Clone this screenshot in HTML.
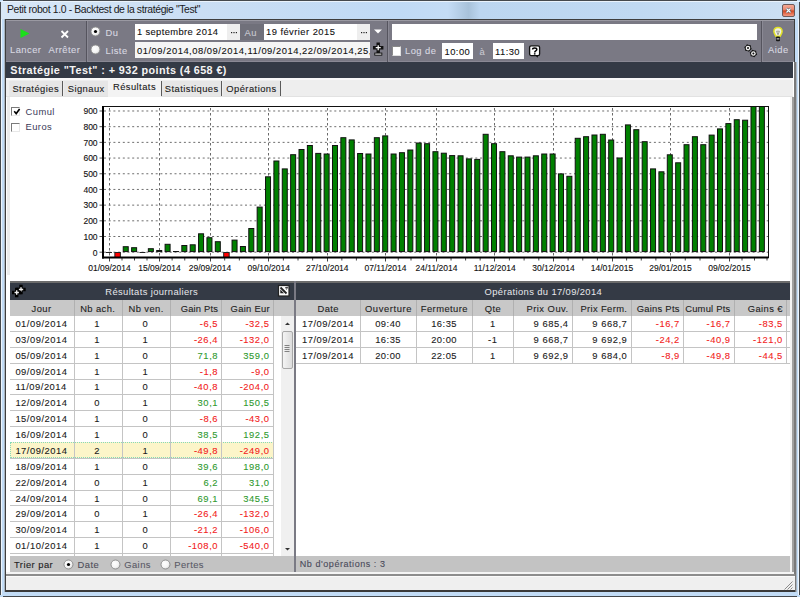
<!DOCTYPE html>
<html><head><meta charset="utf-8"><style>
html,body{margin:0;padding:0;width:800px;height:597px;overflow:hidden;background:#c4daf1;}
body{position:relative;font-family:"Liberation Sans", sans-serif;}
div{position:absolute;}
.tx{-webkit-text-stroke:0.1px currentColor;}
</style></head><body>
<div style="left:0px;top:0px;width:800px;height:597px;background:#c2dcf6;"></div>
<div style="left:3px;top:0px;width:794px;height:1px;background:#45494d;"></div>
<div style="left:0px;top:2px;width:1px;height:593px;background:#45494d;"></div>
<div style="left:1px;top:2px;width:1px;height:593px;background:#eef5fc;"></div>
<div style="left:4px;top:19px;width:1px;height:573px;background:#a8b4c0;"></div>
<div style="left:799px;top:2px;width:1px;height:593px;background:#45494d;"></div>
<div style="left:798px;top:2px;width:1px;height:593px;background:#eef5fc;"></div>
<div style="left:3px;top:595.5px;width:794px;height:1.5px;background:#45494d;"></div>
<div style="left:1px;top:1px;width:798px;height:18px;background:linear-gradient(90deg,#d8e7f6 0%,#cadef4 25%,#c0daf5 50%,#c4dcf5 56%,#a8c2da 58.6%,#bcd6f0 60%,#c0d9f2 80%,#cde0f3 100%);"></div>
<div style="left:1px;top:1px;width:798px;height:1px;background:#eaf3fc;"></div>
<div style="left:7px;top:4.70px;font-size:10.4px;line-height:10.4px;color:#1a1a22;font-weight:400;letter-spacing:-0.37px;white-space:pre;">Petit robot 1.0 - Backtest de la stratégie "Test"</div>
<div style="left:782.3px;top:4.3px;width:12.6px;height:12.5px;border:1px solid #6e5a5a;border-radius:2px;background:linear-gradient(#f2ab98 0%,#ec8a72 40%,#cf4a26 55%,#e67456 80%,#f09a84 100%);box-sizing:border-box"></div>
<svg style="position:absolute;left:784.8px;top:6.9px" width="7" height="7" viewBox="0 0 7 7"><path d="M1.5 1.5 L5.5 5.5 M5.5 1.5 L1.5 5.5" stroke="#3a4a5a" stroke-width="2.4"/><path d="M1.5 1.5 L5.5 5.5 M5.5 1.5 L1.5 5.5" stroke="#fff" stroke-width="1.3"/></svg>
<div style="left:5px;top:19px;width:790px;height:573px;background:#3e3e3e;"></div>
<div style="left:6px;top:20px;width:788px;height:571px;background:#ffffff;"></div>
<div style="left:6px;top:20px;width:788px;height:42px;background:#7a7984;"></div>
<div style="left:6px;top:20px;width:788px;height:1px;background:#9a99a2;"></div>
<div style="left:6px;top:61px;width:788px;height:1px;background:#8a8994;"></div>
<div style="left:86px;top:21px;width:1px;height:41px;background:#55545e;"></div>
<div style="left:87px;top:21px;width:1px;height:41px;background:#8a8994;"></div>
<div style="left:387px;top:21px;width:1px;height:41px;background:#55545e;"></div>
<div style="left:388px;top:21px;width:1px;height:41px;background:#8a8994;"></div>
<div style="left:761px;top:21px;width:1px;height:41px;background:#55545e;"></div>
<div style="left:762px;top:21px;width:1px;height:41px;background:#8a8994;"></div>
<svg style="position:absolute;left:19px;top:28px" width="12" height="12" viewBox="0 0 12 12"><path d="M1.5 1 L10.5 5.5 L1.5 10 Z" fill="#1be01b"/></svg>
<svg style="position:absolute;left:60px;top:30px" width="10" height="9" viewBox="0 0 10 9"><path d="M1.5 1 L8 7.5 M8 1 L1.5 7.5" stroke="#fff" stroke-width="1.8"/></svg>
<div class="tx" style="left:10px;top:45.04px;font-size:9.4px;line-height:9.4px;color:#d8d8e0;font-weight:400;letter-spacing:0.45px;white-space:pre;">Lancer</div>
<div class="tx" style="left:48.5px;top:45.04px;font-size:9.4px;line-height:9.4px;color:#d8d8e0;font-weight:400;letter-spacing:0.45px;white-space:pre;">Arrêter</div>
<svg style="position:absolute;left:90.4px;top:26.2px" width="11" height="11" viewBox="0 0 11 11"><defs><radialGradient id="rg9531" cx="0.4" cy="0.4" r="0.7"><stop offset="0" stop-color="#fff"/><stop offset="0.6" stop-color="#f4f4f4"/><stop offset="1" stop-color="#c8c8c8"/></radialGradient></defs><circle cx="5.5" cy="5.5" r="4.5" fill="url(#rg9531)" stroke="#8a8a8a" stroke-width="0.9"/><circle cx="5.5" cy="5.5" r="1.6" fill="#000"/></svg>
<svg style="position:absolute;left:90.4px;top:44.4px" width="11" height="11" viewBox="0 0 11 11"><defs><radialGradient id="rg9549" cx="0.4" cy="0.4" r="0.7"><stop offset="0" stop-color="#fff"/><stop offset="0.6" stop-color="#f4f4f4"/><stop offset="1" stop-color="#c8c8c8"/></radialGradient></defs><circle cx="5.5" cy="5.5" r="4.5" fill="url(#rg9549)" stroke="#8a8a8a" stroke-width="0.9"/></svg>
<div class="tx" style="left:105.5px;top:27.74px;font-size:9.4px;line-height:9.4px;color:#d8d8e0;font-weight:400;letter-spacing:0.45px;white-space:pre;">Du</div>
<div class="tx" style="left:105.5px;top:45.54px;font-size:9.4px;line-height:9.4px;color:#d8d8e0;font-weight:400;letter-spacing:0.45px;white-space:pre;">Liste</div>
<div style="left:135px;top:24px;width:92px;height:16px;background:#fff;"></div>
<div style="left:227px;top:24px;width:13px;height:16px;background:#eeeeee;"></div>
<svg style="position:absolute;left:230px;top:30.7px" width="8" height="4" viewBox="0 0 8 4"><rect x="1" y="1" width="1.2" height="1.2" fill="#222"/><rect x="3.4" y="1" width="1.2" height="1.2" fill="#222"/><rect x="5.8" y="1" width="1.2" height="1.2" fill="#222"/></svg>
<div class="tx" style="left:136.9px;top:27.24px;font-size:9.4px;line-height:9.4px;color:#111;font-weight:400;letter-spacing:0.37px;white-space:pre;">1 septembre 2014</div>
<div class="tx" style="left:244.5px;top:27.84px;font-size:9.4px;line-height:9.4px;color:#c8c8d0;font-weight:400;letter-spacing:0.45px;white-space:pre;">Au</div>
<div style="left:240px;top:24px;width:24px;height:16px;background:#70707a;"></div>
<div class="tx" style="left:244.5px;top:27.84px;font-size:9.4px;line-height:9.4px;color:#c8c8d0;font-weight:400;letter-spacing:0.45px;white-space:pre;">Au</div>
<div style="left:264px;top:24px;width:93px;height:16px;background:#fff;"></div>
<div style="left:357px;top:24px;width:13px;height:16px;background:#eeeeee;"></div>
<svg style="position:absolute;left:360px;top:30.7px" width="8" height="4" viewBox="0 0 8 4"><rect x="1" y="1" width="1.2" height="1.2" fill="#222"/><rect x="3.4" y="1" width="1.2" height="1.2" fill="#222"/><rect x="5.8" y="1" width="1.2" height="1.2" fill="#222"/></svg>
<div class="tx" style="left:266.0px;top:27.24px;font-size:9.4px;line-height:9.4px;color:#111;font-weight:400;letter-spacing:0.45px;white-space:pre;">19 février 2015</div>
<div style="left:135px;top:42px;width:235px;height:16px;background:#f5f5f5;overflow:hidden"><div class="tx" style="left:2px;top:3.64px;font-size:9.4px;line-height:10px;color:#111;white-space:pre;letter-spacing:0.52px">01/09/2014,08/09/2014,11/09/2014,22/09/2014,25,09</div></div>
<svg style="position:absolute;left:373px;top:28px" width="10" height="7" viewBox="0 0 10 7"><path d="M1 1.5 L9 1.5 L5 5.5 Z" fill="#fff"/></svg>
<svg style="position:absolute;left:372px;top:42px" width="12" height="16" viewBox="0 0 12 16"><path d="M6.2 2.2 V9.2 M2.7 5.7 H9.7" stroke="#111" stroke-width="3.4" stroke-linecap="square"/><path d="M6.2 3.2 V8.2 M3.7 5.7 H8.7" stroke="#fafafa" stroke-width="1.3"/><rect x="2.3" y="10.6" width="8" height="3" fill="#111"/><rect x="3.2" y="11.6" width="6.2" height="1" fill="#f4f4f4"/></svg>
<div style="left:391.5px;top:24px;width:365.7px;height:16px;background:#fff;"></div>
<div style="left:391.5px;top:46px;width:9.5px;height:10px;background:#fff;border-top:1px solid #8a8a8a;border-left:1px solid #8a8a8a;border-right:1px solid #e0e0e0;border-bottom:1px solid #e0e0e0;box-sizing:border-box;"></div>
<div class="tx" style="left:405px;top:45.54px;font-size:9.4px;line-height:9.4px;color:#d8d8e0;font-weight:400;letter-spacing:0.45px;white-space:pre;">Log de</div>
<div style="left:442px;top:43px;width:31px;height:16px;background:#fff;"></div>
<div class="tx" style="left:444.5px;top:46.54px;font-size:9.4px;line-height:9.4px;color:#111;font-weight:400;letter-spacing:0.45px;white-space:pre;">10:00</div>
<div class="tx" style="left:479.5px;top:46.54px;font-size:9.4px;line-height:9.4px;color:#c8c8d0;font-weight:400;letter-spacing:0.45px;white-space:pre;">à</div>
<div style="left:493px;top:43px;width:31px;height:16px;background:#fff;"></div>
<div class="tx" style="left:495px;top:46.54px;font-size:9.4px;line-height:9.4px;color:#111;font-weight:400;letter-spacing:0.45px;white-space:pre;">11:30</div>
<svg style="position:absolute;left:525px;top:42px" width="20" height="20" viewBox="0 0 20 20"><rect x="4.6" y="3.8" width="10" height="9.8" rx="1.6" fill="#fff" stroke="#111" stroke-width="1.3"/><path d="M10.2 13.3 L13.2 13.3 L12.6 15.8 Z" fill="#111"/><path d="M7.6 7.4 C7.6 5.4 11.8 5.4 11.8 7.4 C11.8 8.9 9.7 8.9 9.7 10.4" stroke="#000" stroke-width="1.5" fill="none"/><rect x="8.9" y="11.2" width="1.6" height="1.4" fill="#000"/></svg>
<svg style="position:absolute;left:740px;top:40px" width="20" height="20" viewBox="0 0 20 20"><polygon points="11.77,9.11 10.19,10.29 9.01,11.87 7.20,11.09 5.24,10.86 5.01,8.90 4.23,7.09 5.81,5.91 6.99,4.33 8.80,5.11 10.76,5.34 10.99,7.30" fill="#111"/><circle cx="8" cy="8.1" r="2.3" fill="#f4f4f4"/><circle cx="8" cy="8.1" r="1.0" fill="#111"/><polygon points="17.17,14.51 15.59,15.69 14.41,17.27 12.60,16.49 10.64,16.26 10.41,14.30 9.63,12.49 11.21,11.31 12.39,9.73 14.20,10.51 16.16,10.74 16.39,12.70" fill="#111"/><circle cx="13.4" cy="13.5" r="2.3" fill="#f4f4f4"/><circle cx="13.4" cy="13.5" r="1.0" fill="#111"/></svg>
<svg style="position:absolute;left:771px;top:26px" width="14" height="17" viewBox="0 0 14 17"><path d="M7 1.6 C4.3 1.6 2.9 3.6 2.9 5.6 C2.9 7.4 4.1 8.4 4.9 10.2 H9.1 C9.9 8.4 11.1 7.4 11.1 5.6 C11.1 3.6 9.7 1.6 7 1.6 Z" fill="#f0f0e4" stroke="#e2e226" stroke-width="1.5"/><path d="M5.6 5.2 H8.4 L7 8.8 Z" fill="none" stroke="#8a8a80" stroke-width="0.8"/><rect x="5" y="10.6" width="4" height="4.6" rx="1" fill="#151515"/><rect x="5.6" y="12" width="2.8" height="0.7" fill="#ccc"/><rect x="5.6" y="13.4" width="2.8" height="0.6" fill="#999"/></svg>
<div class="tx" style="left:768px;top:45.04px;font-size:9.4px;line-height:9.4px;color:#d8d8e0;font-weight:400;letter-spacing:0.45px;white-space:pre;">Aide</div>
<div style="left:6px;top:62px;width:787px;height:16px;background:#343a45;"></div>
<div style="left:10.3px;top:64.66px;font-size:10.8px;line-height:10.8px;color:#f4f4f4;font-weight:700;letter-spacing:0.42px;white-space:pre;">Stratégie "Test" : + 932 points (4 658 €)</div>
<div style="left:6px;top:78px;width:787px;height:19px;background:#eeeeee;"></div>
<div style="left:6px;top:78px;width:787px;height:2px;background:#f8f8f8;"></div>
<div style="left:6px;top:95.7px;width:787px;height:1px;background:#e2e2e2;"></div>
<div style="left:9px;top:81px;width:53px;height:15px;background:#e6e6e6;"></div>
<div class="tx" style="left:-164.28px;width:400px;text-align:center;top:83.94px;font-size:9.4px;line-height:9.4px;color:#1a1a1a;font-weight:400;letter-spacing:0.45px;white-space:pre;">Stratégies</div>
<div style="left:64px;top:81px;width:44px;height:15px;background:#e6e6e6;"></div>
<div class="tx" style="left:-113.78px;width:400px;text-align:center;top:83.94px;font-size:9.4px;line-height:9.4px;color:#1a1a1a;font-weight:400;letter-spacing:0.45px;white-space:pre;">Signaux</div>
<div style="left:108px;top:79px;width:52.5px;height:18px;background:#f3f3f3;"></div>
<div class="tx" style="left:-65.53px;width:400px;text-align:center;top:81.84px;font-size:9.4px;line-height:9.4px;color:#1a1a1a;font-weight:400;letter-spacing:0.45px;white-space:pre;">Résultats</div>
<div style="left:162px;top:81px;width:59px;height:15px;background:#e6e6e6;"></div>
<div class="tx" style="left:-8.28px;width:400px;text-align:center;top:83.94px;font-size:9.4px;line-height:9.4px;color:#1a1a1a;font-weight:400;letter-spacing:0.45px;white-space:pre;">Statistiques</div>
<div style="left:223px;top:81px;width:56.5px;height:15px;background:#e6e6e6;"></div>
<div class="tx" style="left:51.48px;width:400px;text-align:center;top:83.94px;font-size:9.4px;line-height:9.4px;color:#1a1a1a;font-weight:400;letter-spacing:0.45px;white-space:pre;">Opérations</div>
<div style="left:62px;top:80.5px;width:1px;height:15.5px;background:#5a5a5a;"></div>
<div style="left:160.5px;top:80.5px;width:1px;height:15.5px;background:#5a5a5a;"></div>
<div style="left:221px;top:80.5px;width:1px;height:15.5px;background:#5a5a5a;"></div>
<div style="left:279.5px;top:80.5px;width:1px;height:15.5px;background:#5a5a5a;"></div>
<div style="left:6px;top:97px;width:786px;height:184px;background:#ffffff;"></div>
<div style="left:7px;top:97px;width:3px;height:178px;background:#ececec;"></div>
<div style="left:11.3px;top:107px;width:9px;height:9px;background:#fff;border-top:1.5px solid #7a7a7a;border-left:1.5px solid #7a7a7a;border-right:1px solid #e8e8e8;border-bottom:1px solid #e8e8e8;box-sizing:border-box;"></div>
<svg style="position:absolute;left:11.5px;top:107px" width="9" height="9" viewBox="0 0 9 9"><path d="M2.2 4.3 L4.2 6.6 L7.6 2" stroke="#000" stroke-width="1.6" fill="none"/></svg>
<div style="left:25.5px;top:106.64px;font-size:9.4px;line-height:9.4px;color:#3a3a58;font-weight:400;letter-spacing:0.45px;white-space:pre;">Cumul</div>
<div style="left:11.3px;top:122.7px;width:9px;height:9px;background:#fff;border-top:1.5px solid #7a7a7a;border-left:1.5px solid #7a7a7a;border-right:1px solid #e8e8e8;border-bottom:1px solid #e8e8e8;box-sizing:border-box;"></div>
<div style="left:25.5px;top:122.44px;font-size:9.4px;line-height:9.4px;color:#3a3a58;font-weight:400;letter-spacing:0.45px;white-space:pre;">Euros</div>
<svg style="position:absolute;left:0;top:0" width="800" height="597" viewBox="0 0 800 597"><line x1="104" y1="252.2" x2="768.5" y2="252.2" stroke="#6e6e6e" stroke-width="1" stroke-dasharray="2 2.7"/><line x1="99.5" y1="252.2" x2="102" y2="252.2" stroke="#555" stroke-width="1"/><text x="97.6" y="255.50" font-size="8.5" text-anchor="end" font-family="Liberation Sans" fill="#111" stroke="#111" stroke-width="0.12">0</text><line x1="104" y1="236.51" x2="768.5" y2="236.51" stroke="#6e6e6e" stroke-width="1" stroke-dasharray="2 2.7"/><line x1="99.5" y1="236.51" x2="102" y2="236.51" stroke="#555" stroke-width="1"/><text x="97.6" y="239.81" font-size="8.5" text-anchor="end" font-family="Liberation Sans" fill="#111" stroke="#111" stroke-width="0.12">100</text><line x1="104" y1="220.82" x2="768.5" y2="220.82" stroke="#6e6e6e" stroke-width="1" stroke-dasharray="2 2.7"/><line x1="99.5" y1="220.82" x2="102" y2="220.82" stroke="#555" stroke-width="1"/><text x="97.6" y="224.12" font-size="8.5" text-anchor="end" font-family="Liberation Sans" fill="#111" stroke="#111" stroke-width="0.12">200</text><line x1="104" y1="205.13" x2="768.5" y2="205.13" stroke="#6e6e6e" stroke-width="1" stroke-dasharray="2 2.7"/><line x1="99.5" y1="205.13" x2="102" y2="205.13" stroke="#555" stroke-width="1"/><text x="97.6" y="208.43" font-size="8.5" text-anchor="end" font-family="Liberation Sans" fill="#111" stroke="#111" stroke-width="0.12">300</text><line x1="104" y1="189.44" x2="768.5" y2="189.44" stroke="#6e6e6e" stroke-width="1" stroke-dasharray="2 2.7"/><line x1="99.5" y1="189.44" x2="102" y2="189.44" stroke="#555" stroke-width="1"/><text x="97.6" y="192.74" font-size="8.5" text-anchor="end" font-family="Liberation Sans" fill="#111" stroke="#111" stroke-width="0.12">400</text><line x1="104" y1="173.75" x2="768.5" y2="173.75" stroke="#6e6e6e" stroke-width="1" stroke-dasharray="2 2.7"/><line x1="99.5" y1="173.75" x2="102" y2="173.75" stroke="#555" stroke-width="1"/><text x="97.6" y="177.05" font-size="8.5" text-anchor="end" font-family="Liberation Sans" fill="#111" stroke="#111" stroke-width="0.12">500</text><line x1="104" y1="158.06" x2="768.5" y2="158.06" stroke="#6e6e6e" stroke-width="1" stroke-dasharray="2 2.7"/><line x1="99.5" y1="158.06" x2="102" y2="158.06" stroke="#555" stroke-width="1"/><text x="97.6" y="161.36" font-size="8.5" text-anchor="end" font-family="Liberation Sans" fill="#111" stroke="#111" stroke-width="0.12">600</text><line x1="104" y1="142.37" x2="768.5" y2="142.37" stroke="#6e6e6e" stroke-width="1" stroke-dasharray="2 2.7"/><line x1="99.5" y1="142.37" x2="102" y2="142.37" stroke="#555" stroke-width="1"/><text x="97.6" y="145.67" font-size="8.5" text-anchor="end" font-family="Liberation Sans" fill="#111" stroke="#111" stroke-width="0.12">700</text><line x1="104" y1="126.68" x2="768.5" y2="126.68" stroke="#6e6e6e" stroke-width="1" stroke-dasharray="2 2.7"/><line x1="99.5" y1="126.68" x2="102" y2="126.68" stroke="#555" stroke-width="1"/><text x="97.6" y="129.98" font-size="8.5" text-anchor="end" font-family="Liberation Sans" fill="#111" stroke="#111" stroke-width="0.12">800</text><line x1="104" y1="110.99" x2="768.5" y2="110.99" stroke="#6e6e6e" stroke-width="1" stroke-dasharray="2 2.7"/><line x1="99.5" y1="110.99" x2="102" y2="110.99" stroke="#555" stroke-width="1"/><text x="97.6" y="114.29" font-size="8.5" text-anchor="end" font-family="Liberation Sans" fill="#111" stroke="#111" stroke-width="0.12">900</text><line x1="109.5" y1="108" x2="109.5" y2="257.5" stroke="#6a6a6a" stroke-width="1" stroke-dasharray="2.5 2.5"/><line x1="109.5" y1="257.5" x2="109.5" y2="261.5" stroke="#444" stroke-width="1"/><text x="109.5" y="271" font-size="8.5" text-anchor="middle" font-family="Liberation Sans" fill="#111" stroke="#111" stroke-width="0.12">01/09/2014</text><line x1="159.5" y1="108" x2="159.5" y2="257.5" stroke="#6a6a6a" stroke-width="1" stroke-dasharray="2.5 2.5"/><line x1="159.5" y1="257.5" x2="159.5" y2="261.5" stroke="#444" stroke-width="1"/><text x="159.5" y="271" font-size="8.5" text-anchor="middle" font-family="Liberation Sans" fill="#111" stroke="#111" stroke-width="0.12">15/09/2014</text><line x1="210.5" y1="108" x2="210.5" y2="257.5" stroke="#6a6a6a" stroke-width="1" stroke-dasharray="2.5 2.5"/><line x1="210.5" y1="257.5" x2="210.5" y2="261.5" stroke="#444" stroke-width="1"/><text x="210.0" y="271" font-size="8.5" text-anchor="middle" font-family="Liberation Sans" fill="#111" stroke="#111" stroke-width="0.12">29/09/2014</text><line x1="268.5" y1="108" x2="268.5" y2="257.5" stroke="#6a6a6a" stroke-width="1" stroke-dasharray="2.5 2.5"/><line x1="268.5" y1="257.5" x2="268.5" y2="261.5" stroke="#444" stroke-width="1"/><text x="268.7" y="271" font-size="8.5" text-anchor="middle" font-family="Liberation Sans" fill="#111" stroke="#111" stroke-width="0.12">09/10/2014</text><line x1="327.5" y1="108" x2="327.5" y2="257.5" stroke="#6a6a6a" stroke-width="1" stroke-dasharray="2.5 2.5"/><line x1="327.5" y1="257.5" x2="327.5" y2="261.5" stroke="#444" stroke-width="1"/><text x="327.3" y="271" font-size="8.5" text-anchor="middle" font-family="Liberation Sans" fill="#111" stroke="#111" stroke-width="0.12">27/10/2014</text><line x1="385.5" y1="108" x2="385.5" y2="257.5" stroke="#6a6a6a" stroke-width="1" stroke-dasharray="2.5 2.5"/><line x1="385.5" y1="257.5" x2="385.5" y2="261.5" stroke="#444" stroke-width="1"/><text x="385.5" y="271" font-size="8.5" text-anchor="middle" font-family="Liberation Sans" fill="#111" stroke="#111" stroke-width="0.12">07/11/2014</text><line x1="436.5" y1="108" x2="436.5" y2="257.5" stroke="#6a6a6a" stroke-width="1" stroke-dasharray="2.5 2.5"/><line x1="436.5" y1="257.5" x2="436.5" y2="261.5" stroke="#444" stroke-width="1"/><text x="436.5" y="271" font-size="8.5" text-anchor="middle" font-family="Liberation Sans" fill="#111" stroke="#111" stroke-width="0.12">24/11/2014</text><line x1="494.5" y1="108" x2="494.5" y2="257.5" stroke="#6a6a6a" stroke-width="1" stroke-dasharray="2.5 2.5"/><line x1="494.5" y1="257.5" x2="494.5" y2="261.5" stroke="#444" stroke-width="1"/><text x="494.7" y="271" font-size="8.5" text-anchor="middle" font-family="Liberation Sans" fill="#111" stroke="#111" stroke-width="0.12">11/12/2014</text><line x1="553.5" y1="108" x2="553.5" y2="257.5" stroke="#6a6a6a" stroke-width="1" stroke-dasharray="2.5 2.5"/><line x1="553.5" y1="257.5" x2="553.5" y2="261.5" stroke="#444" stroke-width="1"/><text x="553.5" y="271" font-size="8.5" text-anchor="middle" font-family="Liberation Sans" fill="#111" stroke="#111" stroke-width="0.12">30/12/2014</text><line x1="612.5" y1="108" x2="612.5" y2="257.5" stroke="#6a6a6a" stroke-width="1" stroke-dasharray="2.5 2.5"/><line x1="612.5" y1="257.5" x2="612.5" y2="261.5" stroke="#444" stroke-width="1"/><text x="612.0" y="271" font-size="8.5" text-anchor="middle" font-family="Liberation Sans" fill="#111" stroke="#111" stroke-width="0.12">14/01/2015</text><line x1="670.5" y1="108" x2="670.5" y2="257.5" stroke="#6a6a6a" stroke-width="1" stroke-dasharray="2.5 2.5"/><line x1="670.5" y1="257.5" x2="670.5" y2="261.5" stroke="#444" stroke-width="1"/><text x="670.5" y="271" font-size="8.5" text-anchor="middle" font-family="Liberation Sans" fill="#111" stroke="#111" stroke-width="0.12">29/01/2015</text><line x1="729.5" y1="108" x2="729.5" y2="257.5" stroke="#6a6a6a" stroke-width="1" stroke-dasharray="2.5 2.5"/><line x1="729.5" y1="257.5" x2="729.5" y2="261.5" stroke="#444" stroke-width="1"/><text x="729.5" y="271" font-size="8.5" text-anchor="middle" font-family="Liberation Sans" fill="#111" stroke="#111" stroke-width="0.12">09/02/2015</text><line x1="122.00" y1="257.5" x2="122.00" y2="260.5" stroke="#444" stroke-width="1"/><line x1="134.50" y1="257.5" x2="134.50" y2="260.5" stroke="#444" stroke-width="1"/><line x1="147.00" y1="257.5" x2="147.00" y2="260.5" stroke="#444" stroke-width="1"/><line x1="172.12" y1="257.5" x2="172.12" y2="260.5" stroke="#444" stroke-width="1"/><line x1="184.75" y1="257.5" x2="184.75" y2="260.5" stroke="#444" stroke-width="1"/><line x1="197.38" y1="257.5" x2="197.38" y2="260.5" stroke="#444" stroke-width="1"/><line x1="224.68" y1="257.5" x2="224.68" y2="260.5" stroke="#444" stroke-width="1"/><line x1="239.35" y1="257.5" x2="239.35" y2="260.5" stroke="#444" stroke-width="1"/><line x1="254.02" y1="257.5" x2="254.02" y2="260.5" stroke="#444" stroke-width="1"/><line x1="283.35" y1="257.5" x2="283.35" y2="260.5" stroke="#444" stroke-width="1"/><line x1="298.00" y1="257.5" x2="298.00" y2="260.5" stroke="#444" stroke-width="1"/><line x1="312.65" y1="257.5" x2="312.65" y2="260.5" stroke="#444" stroke-width="1"/><line x1="341.85" y1="257.5" x2="341.85" y2="260.5" stroke="#444" stroke-width="1"/><line x1="356.40" y1="257.5" x2="356.40" y2="260.5" stroke="#444" stroke-width="1"/><line x1="370.95" y1="257.5" x2="370.95" y2="260.5" stroke="#444" stroke-width="1"/><line x1="398.25" y1="257.5" x2="398.25" y2="260.5" stroke="#444" stroke-width="1"/><line x1="411.00" y1="257.5" x2="411.00" y2="260.5" stroke="#444" stroke-width="1"/><line x1="423.75" y1="257.5" x2="423.75" y2="260.5" stroke="#444" stroke-width="1"/><line x1="451.05" y1="257.5" x2="451.05" y2="260.5" stroke="#444" stroke-width="1"/><line x1="465.60" y1="257.5" x2="465.60" y2="260.5" stroke="#444" stroke-width="1"/><line x1="480.15" y1="257.5" x2="480.15" y2="260.5" stroke="#444" stroke-width="1"/><line x1="509.40" y1="257.5" x2="509.40" y2="260.5" stroke="#444" stroke-width="1"/><line x1="524.10" y1="257.5" x2="524.10" y2="260.5" stroke="#444" stroke-width="1"/><line x1="538.80" y1="257.5" x2="538.80" y2="260.5" stroke="#444" stroke-width="1"/><line x1="568.12" y1="257.5" x2="568.12" y2="260.5" stroke="#444" stroke-width="1"/><line x1="582.75" y1="257.5" x2="582.75" y2="260.5" stroke="#444" stroke-width="1"/><line x1="597.38" y1="257.5" x2="597.38" y2="260.5" stroke="#444" stroke-width="1"/><line x1="626.62" y1="257.5" x2="626.62" y2="260.5" stroke="#444" stroke-width="1"/><line x1="641.25" y1="257.5" x2="641.25" y2="260.5" stroke="#444" stroke-width="1"/><line x1="655.88" y1="257.5" x2="655.88" y2="260.5" stroke="#444" stroke-width="1"/><line x1="685.25" y1="257.5" x2="685.25" y2="260.5" stroke="#444" stroke-width="1"/><line x1="700.00" y1="257.5" x2="700.00" y2="260.5" stroke="#444" stroke-width="1"/><line x1="714.75" y1="257.5" x2="714.75" y2="260.5" stroke="#444" stroke-width="1"/><line x1="742.00" y1="257.5" x2="742.00" y2="260.5" stroke="#444" stroke-width="1"/><line x1="754.50" y1="257.5" x2="754.50" y2="260.5" stroke="#444" stroke-width="1"/><line x1="767.00" y1="257.5" x2="767.00" y2="260.5" stroke="#444" stroke-width="1"/><line x1="106.00" y1="252.5" x2="112.00" y2="252.5" stroke="#222" stroke-width="1"/><rect x="114.87" y="252.5" width="5.5" height="5" fill="#ff0000" stroke="#222" stroke-width="1"/><rect x="123.24" y="246.70" width="5.0" height="4.90" fill="#008000" stroke="#111" stroke-width="1"/><rect x="131.61" y="247.70" width="5.0" height="3.90" fill="#008000" stroke="#111" stroke-width="1"/><line x1="139.48" y1="252.5" x2="145.48" y2="252.5" stroke="#222" stroke-width="1"/><rect x="148.35" y="248.70" width="5.0" height="2.90" fill="#008000" stroke="#111" stroke-width="1"/><rect x="156.72" y="250.50" width="5.0" height="1.10" fill="#008000" stroke="#111" stroke-width="1"/><rect x="165.09" y="244.30" width="5.0" height="7.30" fill="#008000" stroke="#111" stroke-width="1"/><rect x="173.46" y="251.50" width="5.0" height="0.10" fill="#008000" stroke="#111" stroke-width="1"/><rect x="181.83" y="245.50" width="5.0" height="6.10" fill="#008000" stroke="#111" stroke-width="1"/><rect x="190.20" y="244.80" width="5.0" height="6.80" fill="#008000" stroke="#111" stroke-width="1"/><rect x="198.57" y="233.80" width="5.0" height="17.80" fill="#008000" stroke="#111" stroke-width="1"/><rect x="206.94" y="237.70" width="5.0" height="13.90" fill="#008000" stroke="#111" stroke-width="1"/><rect x="215.31" y="241.70" width="5.0" height="9.90" fill="#008000" stroke="#111" stroke-width="1"/><rect x="223.68" y="252.5" width="5.5" height="5" fill="#ff0000" stroke="#222" stroke-width="1"/><rect x="232.05" y="240.10" width="5.0" height="11.50" fill="#008000" stroke="#111" stroke-width="1"/><rect x="240.42" y="246.50" width="5.0" height="5.10" fill="#008000" stroke="#111" stroke-width="1"/><rect x="248.79" y="228.50" width="5.0" height="23.10" fill="#008000" stroke="#111" stroke-width="1"/><rect x="257.16" y="207.10" width="5.0" height="44.50" fill="#008000" stroke="#111" stroke-width="1"/><rect x="265.53" y="176.80" width="5.0" height="74.80" fill="#008000" stroke="#111" stroke-width="1"/><rect x="273.90" y="161.00" width="5.0" height="90.60" fill="#008000" stroke="#111" stroke-width="1"/><rect x="282.27" y="168.90" width="5.0" height="82.70" fill="#008000" stroke="#111" stroke-width="1"/><rect x="290.64" y="154.70" width="5.0" height="96.90" fill="#008000" stroke="#111" stroke-width="1"/><rect x="299.01" y="149.50" width="5.0" height="102.10" fill="#008000" stroke="#111" stroke-width="1"/><rect x="307.38" y="145.50" width="5.0" height="106.10" fill="#008000" stroke="#111" stroke-width="1"/><rect x="315.75" y="153.40" width="5.0" height="98.20" fill="#008000" stroke="#111" stroke-width="1"/><rect x="324.12" y="154.00" width="5.0" height="97.60" fill="#008000" stroke="#111" stroke-width="1"/><rect x="332.49" y="145.50" width="5.0" height="106.10" fill="#008000" stroke="#111" stroke-width="1"/><rect x="340.86" y="137.70" width="5.0" height="113.90" fill="#008000" stroke="#111" stroke-width="1"/><rect x="349.23" y="139.90" width="5.0" height="111.70" fill="#008000" stroke="#111" stroke-width="1"/><rect x="357.60" y="153.50" width="5.0" height="98.10" fill="#008000" stroke="#111" stroke-width="1"/><rect x="365.97" y="154.00" width="5.0" height="97.60" fill="#008000" stroke="#111" stroke-width="1"/><rect x="374.34" y="137.70" width="5.0" height="113.90" fill="#008000" stroke="#111" stroke-width="1"/><rect x="382.71" y="135.90" width="5.0" height="115.70" fill="#008000" stroke="#111" stroke-width="1"/><rect x="391.08" y="154.00" width="5.0" height="97.60" fill="#008000" stroke="#111" stroke-width="1"/><rect x="399.45" y="152.70" width="5.0" height="98.90" fill="#008000" stroke="#111" stroke-width="1"/><rect x="407.82" y="150.00" width="5.0" height="101.60" fill="#008000" stroke="#111" stroke-width="1"/><rect x="416.19" y="143.00" width="5.0" height="108.60" fill="#008000" stroke="#111" stroke-width="1"/><rect x="424.56" y="143.70" width="5.0" height="107.90" fill="#008000" stroke="#111" stroke-width="1"/><rect x="432.93" y="151.70" width="5.0" height="99.90" fill="#008000" stroke="#111" stroke-width="1"/><rect x="441.30" y="153.20" width="5.0" height="98.40" fill="#008000" stroke="#111" stroke-width="1"/><rect x="449.67" y="155.60" width="5.0" height="96.00" fill="#008000" stroke="#111" stroke-width="1"/><rect x="458.04" y="155.80" width="5.0" height="95.80" fill="#008000" stroke="#111" stroke-width="1"/><rect x="466.41" y="158.90" width="5.0" height="92.70" fill="#008000" stroke="#111" stroke-width="1"/><rect x="474.78" y="159.40" width="5.0" height="92.20" fill="#008000" stroke="#111" stroke-width="1"/><rect x="483.15" y="134.30" width="5.0" height="117.30" fill="#008000" stroke="#111" stroke-width="1"/><rect x="491.52" y="143.70" width="5.0" height="107.90" fill="#008000" stroke="#111" stroke-width="1"/><rect x="499.89" y="151.70" width="5.0" height="99.90" fill="#008000" stroke="#111" stroke-width="1"/><rect x="508.26" y="155.80" width="5.0" height="95.80" fill="#008000" stroke="#111" stroke-width="1"/><rect x="516.63" y="157.10" width="5.0" height="94.50" fill="#008000" stroke="#111" stroke-width="1"/><rect x="525.00" y="157.10" width="5.0" height="94.50" fill="#008000" stroke="#111" stroke-width="1"/><rect x="533.37" y="155.80" width="5.0" height="95.80" fill="#008000" stroke="#111" stroke-width="1"/><rect x="541.74" y="154.00" width="5.0" height="97.60" fill="#008000" stroke="#111" stroke-width="1"/><rect x="550.11" y="154.00" width="5.0" height="97.60" fill="#008000" stroke="#111" stroke-width="1"/><rect x="558.48" y="173.90" width="5.0" height="77.70" fill="#008000" stroke="#111" stroke-width="1"/><rect x="566.85" y="176.30" width="5.0" height="75.30" fill="#008000" stroke="#111" stroke-width="1"/><rect x="575.22" y="138.30" width="5.0" height="113.30" fill="#008000" stroke="#111" stroke-width="1"/><rect x="583.59" y="136.70" width="5.0" height="114.90" fill="#008000" stroke="#111" stroke-width="1"/><rect x="591.96" y="135.00" width="5.0" height="116.60" fill="#008000" stroke="#111" stroke-width="1"/><rect x="600.33" y="134.30" width="5.0" height="117.30" fill="#008000" stroke="#111" stroke-width="1"/><rect x="608.70" y="140.00" width="5.0" height="111.60" fill="#008000" stroke="#111" stroke-width="1"/><rect x="617.07" y="158.00" width="5.0" height="93.60" fill="#008000" stroke="#111" stroke-width="1"/><rect x="625.44" y="124.90" width="5.0" height="126.70" fill="#008000" stroke="#111" stroke-width="1"/><rect x="633.81" y="129.70" width="5.0" height="121.90" fill="#008000" stroke="#111" stroke-width="1"/><rect x="642.18" y="141.70" width="5.0" height="109.90" fill="#008000" stroke="#111" stroke-width="1"/><rect x="650.55" y="168.90" width="5.0" height="82.70" fill="#008000" stroke="#111" stroke-width="1"/><rect x="658.92" y="171.80" width="5.0" height="79.80" fill="#008000" stroke="#111" stroke-width="1"/><rect x="667.29" y="154.80" width="5.0" height="96.80" fill="#008000" stroke="#111" stroke-width="1"/><rect x="675.66" y="162.80" width="5.0" height="88.80" fill="#008000" stroke="#111" stroke-width="1"/><rect x="684.03" y="144.70" width="5.0" height="106.90" fill="#008000" stroke="#111" stroke-width="1"/><rect x="692.40" y="136.70" width="5.0" height="114.90" fill="#008000" stroke="#111" stroke-width="1"/><rect x="700.77" y="144.70" width="5.0" height="106.90" fill="#008000" stroke="#111" stroke-width="1"/><rect x="709.14" y="135.10" width="5.0" height="116.50" fill="#008000" stroke="#111" stroke-width="1"/><rect x="717.51" y="128.90" width="5.0" height="122.70" fill="#008000" stroke="#111" stroke-width="1"/><rect x="725.88" y="123.60" width="5.0" height="128.00" fill="#008000" stroke="#111" stroke-width="1"/><rect x="734.25" y="119.70" width="5.0" height="131.90" fill="#008000" stroke="#111" stroke-width="1"/><rect x="742.62" y="120.20" width="5.0" height="131.40" fill="#008000" stroke="#111" stroke-width="1"/><rect x="750.99" y="106.50" width="5.0" height="145.10" fill="#008000" stroke="#111" stroke-width="1"/><rect x="759.36" y="106.50" width="5.0" height="145.10" fill="#008000" stroke="#111" stroke-width="1"/><rect x="103.5" y="106.5" width="665.0" height="151.0" fill="none" stroke="#111" stroke-width="1"/><line x1="103" y1="106" x2="103" y2="258.5" stroke="#000" stroke-width="2"/><line x1="102" y1="257.5" x2="768.5" y2="257.5" stroke="#000" stroke-width="2"/></svg>
<div style="left:6px;top:279px;width:788px;height:2px;background:#ffffff;"></div>
<div style="left:10px;top:280.6px;width:283.5px;height:2px;background:#6c6c6c;"></div>
<div style="left:296px;top:280.6px;width:494.3px;height:2px;background:#6c6c6c;"></div>
<div style="left:10px;top:282.5px;width:283.5px;height:17px;background:#343a45;"></div>
<div style="left:-48.31px;width:400px;text-align:center;top:286.84px;font-size:9.4px;line-height:9.4px;color:#e8e8ec;font-weight:400;letter-spacing:0.38px;white-space:pre;">Résultats journaliers</div>
<svg style="position:absolute;left:10px;top:283px" width="18" height="15" viewBox="0 0 18 15"><path d="M11 3.5 V9.5 M8 6.5 H14" stroke="#000" stroke-width="3.4" stroke-linecap="square"/><path d="M11 4.3 V8.7 M8.8 6.5 H13.2" stroke="#eeeeee" stroke-width="1.4"/><path d="M6.7 6.5 V12.5 M3.7 9.5 H9.7" stroke="#000" stroke-width="3.4" stroke-linecap="square"/><path d="M6.7 7.3 V11.7 M4.5 9.5 H8.9" stroke="#eeeeee" stroke-width="1.4"/></svg>
<svg style="position:absolute;left:277px;top:284px" width="14" height="14" viewBox="0 0 14 14"><rect x="1.5" y="1.5" width="10.5" height="10.5" fill="#fafafa" stroke="#222" stroke-width="1.2"/><path d="M3.5 3.5 L9.5 9.5" stroke="#222" stroke-width="1.8"/><path d="M3.3 9.3 H7 L3.3 5.6 Z" fill="#222"/><path d="M8 4 L10.5 3 L9.5 5.5" stroke="#222" stroke-width="0.9" fill="none"/></svg>
<div style="left:10px;top:299.5px;width:283.5px;height:16px;background:#c8c8c8;"></div>
<div style="left:73.6px;top:299.5px;width:1px;height:16px;background:#b0b0b0;"></div>
<div style="left:121.5px;top:299.5px;width:1px;height:16px;background:#b0b0b0;"></div>
<div style="left:170.0px;top:299.5px;width:1px;height:16px;background:#b0b0b0;"></div>
<div style="left:220.75px;top:299.5px;width:1px;height:16px;background:#b0b0b0;"></div>
<div style="left:273.1px;top:299.5px;width:1px;height:16px;background:#b0b0b0;"></div>
<div class="tx" style="left:-158.50px;width:400px;text-align:center;top:304.04px;font-size:9.4px;line-height:9.4px;color:#222;font-weight:400;letter-spacing:0.4px;white-space:pre;">Jour</div>
<div class="tx" style="left:-102.30px;width:400px;text-align:center;top:304.04px;font-size:9.4px;line-height:9.4px;color:#222;font-weight:400;letter-spacing:0.4px;white-space:pre;">Nb ach.</div>
<div class="tx" style="left:-53.90px;width:400px;text-align:center;top:304.04px;font-size:9.4px;line-height:9.4px;color:#222;font-weight:400;letter-spacing:0.4px;white-space:pre;">Nb ven.</div>
<div class="tx" style="left:-181.80px;width:400px;text-align:right;top:304.04px;font-size:9.4px;line-height:9.4px;color:#222;font-weight:400;letter-spacing:0.2px;white-space:pre;">Gain Pts</div>
<div class="tx" style="left:-130.00px;width:400px;text-align:right;top:304.04px;font-size:9.4px;line-height:9.4px;color:#222;font-weight:400;letter-spacing:0.3px;white-space:pre;">Gain Eur</div>
<div style="left:10px;top:315.5px;width:263.5px;height:240px;background:#ffffff;"></div>
<div class="tx" style="left:15.4px;top:319.04px;font-size:9.4px;line-height:9.4px;color:#1a1a1a;font-weight:400;letter-spacing:0.52px;white-space:pre;">01/09/2014</div>
<div class="tx" style="left:-102.98px;width:400px;text-align:center;top:319.04px;font-size:9.4px;line-height:9.4px;color:#1a1a1a;font-weight:400;letter-spacing:0.45px;white-space:pre;">1</div>
<div class="tx" style="left:-54.58px;width:400px;text-align:center;top:319.04px;font-size:9.4px;line-height:9.4px;color:#1a1a1a;font-weight:400;letter-spacing:0.45px;white-space:pre;">0</div>
<div class="tx" style="left:-181.95px;width:400px;text-align:right;top:319.04px;font-size:9.4px;line-height:9.4px;color:#f21c1c;font-weight:400;letter-spacing:0.55px;white-space:pre;">-6,5</div>
<div class="tx" style="left:-130.45px;width:400px;text-align:right;top:319.04px;font-size:9.4px;line-height:9.4px;color:#f21c1c;font-weight:400;letter-spacing:0.55px;white-space:pre;">-32,5</div>
<div style="left:10px;top:330.96000000000004px;width:263.5px;height:1px;background:#c4c4c4;"></div>
<div class="tx" style="left:15.4px;top:334.90px;font-size:9.4px;line-height:9.4px;color:#1a1a1a;font-weight:400;letter-spacing:0.52px;white-space:pre;">03/09/2014</div>
<div class="tx" style="left:-102.98px;width:400px;text-align:center;top:334.90px;font-size:9.4px;line-height:9.4px;color:#1a1a1a;font-weight:400;letter-spacing:0.45px;white-space:pre;">1</div>
<div class="tx" style="left:-54.58px;width:400px;text-align:center;top:334.90px;font-size:9.4px;line-height:9.4px;color:#1a1a1a;font-weight:400;letter-spacing:0.45px;white-space:pre;">1</div>
<div class="tx" style="left:-181.95px;width:400px;text-align:right;top:334.90px;font-size:9.4px;line-height:9.4px;color:#f21c1c;font-weight:400;letter-spacing:0.55px;white-space:pre;">-26,4</div>
<div class="tx" style="left:-130.45px;width:400px;text-align:right;top:334.90px;font-size:9.4px;line-height:9.4px;color:#f21c1c;font-weight:400;letter-spacing:0.55px;white-space:pre;">-132,0</div>
<div style="left:10px;top:346.82000000000005px;width:263.5px;height:1px;background:#c4c4c4;"></div>
<div class="tx" style="left:15.4px;top:350.76px;font-size:9.4px;line-height:9.4px;color:#1a1a1a;font-weight:400;letter-spacing:0.52px;white-space:pre;">05/09/2014</div>
<div class="tx" style="left:-102.98px;width:400px;text-align:center;top:350.76px;font-size:9.4px;line-height:9.4px;color:#1a1a1a;font-weight:400;letter-spacing:0.45px;white-space:pre;">1</div>
<div class="tx" style="left:-54.58px;width:400px;text-align:center;top:350.76px;font-size:9.4px;line-height:9.4px;color:#1a1a1a;font-weight:400;letter-spacing:0.45px;white-space:pre;">0</div>
<div class="tx" style="left:-181.95px;width:400px;text-align:right;top:350.76px;font-size:9.4px;line-height:9.4px;color:#2f9a2f;font-weight:400;letter-spacing:0.55px;white-space:pre;">71,8</div>
<div class="tx" style="left:-130.45px;width:400px;text-align:right;top:350.76px;font-size:9.4px;line-height:9.4px;color:#2f9a2f;font-weight:400;letter-spacing:0.55px;white-space:pre;">359,0</div>
<div style="left:10px;top:362.68000000000006px;width:263.5px;height:1px;background:#c4c4c4;"></div>
<div class="tx" style="left:15.4px;top:366.62px;font-size:9.4px;line-height:9.4px;color:#1a1a1a;font-weight:400;letter-spacing:0.52px;white-space:pre;">09/09/2014</div>
<div class="tx" style="left:-102.98px;width:400px;text-align:center;top:366.62px;font-size:9.4px;line-height:9.4px;color:#1a1a1a;font-weight:400;letter-spacing:0.45px;white-space:pre;">1</div>
<div class="tx" style="left:-54.58px;width:400px;text-align:center;top:366.62px;font-size:9.4px;line-height:9.4px;color:#1a1a1a;font-weight:400;letter-spacing:0.45px;white-space:pre;">1</div>
<div class="tx" style="left:-181.95px;width:400px;text-align:right;top:366.62px;font-size:9.4px;line-height:9.4px;color:#f21c1c;font-weight:400;letter-spacing:0.55px;white-space:pre;">-1,8</div>
<div class="tx" style="left:-130.45px;width:400px;text-align:right;top:366.62px;font-size:9.4px;line-height:9.4px;color:#f21c1c;font-weight:400;letter-spacing:0.55px;white-space:pre;">-9,0</div>
<div style="left:10px;top:378.54px;width:263.5px;height:1px;background:#c4c4c4;"></div>
<div class="tx" style="left:15.4px;top:382.48px;font-size:9.4px;line-height:9.4px;color:#1a1a1a;font-weight:400;letter-spacing:0.52px;white-space:pre;">11/09/2014</div>
<div class="tx" style="left:-102.98px;width:400px;text-align:center;top:382.48px;font-size:9.4px;line-height:9.4px;color:#1a1a1a;font-weight:400;letter-spacing:0.45px;white-space:pre;">1</div>
<div class="tx" style="left:-54.58px;width:400px;text-align:center;top:382.48px;font-size:9.4px;line-height:9.4px;color:#1a1a1a;font-weight:400;letter-spacing:0.45px;white-space:pre;">0</div>
<div class="tx" style="left:-181.95px;width:400px;text-align:right;top:382.48px;font-size:9.4px;line-height:9.4px;color:#f21c1c;font-weight:400;letter-spacing:0.55px;white-space:pre;">-40,8</div>
<div class="tx" style="left:-130.45px;width:400px;text-align:right;top:382.48px;font-size:9.4px;line-height:9.4px;color:#f21c1c;font-weight:400;letter-spacing:0.55px;white-space:pre;">-204,0</div>
<div style="left:10px;top:394.40000000000003px;width:263.5px;height:1px;background:#c4c4c4;"></div>
<div class="tx" style="left:15.4px;top:398.34px;font-size:9.4px;line-height:9.4px;color:#1a1a1a;font-weight:400;letter-spacing:0.52px;white-space:pre;">12/09/2014</div>
<div class="tx" style="left:-102.98px;width:400px;text-align:center;top:398.34px;font-size:9.4px;line-height:9.4px;color:#1a1a1a;font-weight:400;letter-spacing:0.45px;white-space:pre;">0</div>
<div class="tx" style="left:-54.58px;width:400px;text-align:center;top:398.34px;font-size:9.4px;line-height:9.4px;color:#1a1a1a;font-weight:400;letter-spacing:0.45px;white-space:pre;">1</div>
<div class="tx" style="left:-181.95px;width:400px;text-align:right;top:398.34px;font-size:9.4px;line-height:9.4px;color:#2f9a2f;font-weight:400;letter-spacing:0.55px;white-space:pre;">30,1</div>
<div class="tx" style="left:-130.45px;width:400px;text-align:right;top:398.34px;font-size:9.4px;line-height:9.4px;color:#2f9a2f;font-weight:400;letter-spacing:0.55px;white-space:pre;">150,5</div>
<div style="left:10px;top:410.26000000000005px;width:263.5px;height:1px;background:#c4c4c4;"></div>
<div class="tx" style="left:15.4px;top:414.20px;font-size:9.4px;line-height:9.4px;color:#1a1a1a;font-weight:400;letter-spacing:0.52px;white-space:pre;">15/09/2014</div>
<div class="tx" style="left:-102.98px;width:400px;text-align:center;top:414.20px;font-size:9.4px;line-height:9.4px;color:#1a1a1a;font-weight:400;letter-spacing:0.45px;white-space:pre;">1</div>
<div class="tx" style="left:-54.58px;width:400px;text-align:center;top:414.20px;font-size:9.4px;line-height:9.4px;color:#1a1a1a;font-weight:400;letter-spacing:0.45px;white-space:pre;">0</div>
<div class="tx" style="left:-181.95px;width:400px;text-align:right;top:414.20px;font-size:9.4px;line-height:9.4px;color:#f21c1c;font-weight:400;letter-spacing:0.55px;white-space:pre;">-8,6</div>
<div class="tx" style="left:-130.45px;width:400px;text-align:right;top:414.20px;font-size:9.4px;line-height:9.4px;color:#f21c1c;font-weight:400;letter-spacing:0.55px;white-space:pre;">-43,0</div>
<div style="left:10px;top:426.12px;width:263.5px;height:1px;background:#c4c4c4;"></div>
<div class="tx" style="left:15.4px;top:430.06px;font-size:9.4px;line-height:9.4px;color:#1a1a1a;font-weight:400;letter-spacing:0.52px;white-space:pre;">16/09/2014</div>
<div class="tx" style="left:-102.98px;width:400px;text-align:center;top:430.06px;font-size:9.4px;line-height:9.4px;color:#1a1a1a;font-weight:400;letter-spacing:0.45px;white-space:pre;">1</div>
<div class="tx" style="left:-54.58px;width:400px;text-align:center;top:430.06px;font-size:9.4px;line-height:9.4px;color:#1a1a1a;font-weight:400;letter-spacing:0.45px;white-space:pre;">0</div>
<div class="tx" style="left:-181.95px;width:400px;text-align:right;top:430.06px;font-size:9.4px;line-height:9.4px;color:#2f9a2f;font-weight:400;letter-spacing:0.55px;white-space:pre;">38,5</div>
<div class="tx" style="left:-130.45px;width:400px;text-align:right;top:430.06px;font-size:9.4px;line-height:9.4px;color:#2f9a2f;font-weight:400;letter-spacing:0.55px;white-space:pre;">192,5</div>
<div style="left:10px;top:441.98px;width:263.5px;height:1px;background:#c4c4c4;"></div>
<div style="left:10px;top:442.08000000000004px;width:270px;height:16.259999999999998px;background:#fcf5c9;border:1px dotted #86d8b8;box-sizing:border-box;"></div>
<div class="tx" style="left:15.4px;top:445.92px;font-size:9.4px;line-height:9.4px;color:#1a1a1a;font-weight:400;letter-spacing:0.52px;white-space:pre;">17/09/2014</div>
<div class="tx" style="left:-102.98px;width:400px;text-align:center;top:445.92px;font-size:9.4px;line-height:9.4px;color:#1a1a1a;font-weight:400;letter-spacing:0.45px;white-space:pre;">2</div>
<div class="tx" style="left:-54.58px;width:400px;text-align:center;top:445.92px;font-size:9.4px;line-height:9.4px;color:#1a1a1a;font-weight:400;letter-spacing:0.45px;white-space:pre;">1</div>
<div class="tx" style="left:-181.95px;width:400px;text-align:right;top:445.92px;font-size:9.4px;line-height:9.4px;color:#f21c1c;font-weight:400;letter-spacing:0.55px;white-space:pre;">-49,8</div>
<div class="tx" style="left:-130.45px;width:400px;text-align:right;top:445.92px;font-size:9.4px;line-height:9.4px;color:#f21c1c;font-weight:400;letter-spacing:0.55px;white-space:pre;">-249,0</div>
<div style="left:10px;top:457.84000000000003px;width:263.5px;height:1px;background:#c4c4c4;"></div>
<div class="tx" style="left:15.4px;top:461.78px;font-size:9.4px;line-height:9.4px;color:#1a1a1a;font-weight:400;letter-spacing:0.52px;white-space:pre;">18/09/2014</div>
<div class="tx" style="left:-102.98px;width:400px;text-align:center;top:461.78px;font-size:9.4px;line-height:9.4px;color:#1a1a1a;font-weight:400;letter-spacing:0.45px;white-space:pre;">1</div>
<div class="tx" style="left:-54.58px;width:400px;text-align:center;top:461.78px;font-size:9.4px;line-height:9.4px;color:#1a1a1a;font-weight:400;letter-spacing:0.45px;white-space:pre;">0</div>
<div class="tx" style="left:-181.95px;width:400px;text-align:right;top:461.78px;font-size:9.4px;line-height:9.4px;color:#2f9a2f;font-weight:400;letter-spacing:0.55px;white-space:pre;">39,6</div>
<div class="tx" style="left:-130.45px;width:400px;text-align:right;top:461.78px;font-size:9.4px;line-height:9.4px;color:#2f9a2f;font-weight:400;letter-spacing:0.55px;white-space:pre;">198,0</div>
<div style="left:10px;top:473.70000000000005px;width:263.5px;height:1px;background:#c4c4c4;"></div>
<div class="tx" style="left:15.4px;top:477.64px;font-size:9.4px;line-height:9.4px;color:#1a1a1a;font-weight:400;letter-spacing:0.52px;white-space:pre;">22/09/2014</div>
<div class="tx" style="left:-102.98px;width:400px;text-align:center;top:477.64px;font-size:9.4px;line-height:9.4px;color:#1a1a1a;font-weight:400;letter-spacing:0.45px;white-space:pre;">0</div>
<div class="tx" style="left:-54.58px;width:400px;text-align:center;top:477.64px;font-size:9.4px;line-height:9.4px;color:#1a1a1a;font-weight:400;letter-spacing:0.45px;white-space:pre;">1</div>
<div class="tx" style="left:-181.95px;width:400px;text-align:right;top:477.64px;font-size:9.4px;line-height:9.4px;color:#2f9a2f;font-weight:400;letter-spacing:0.55px;white-space:pre;">6,2</div>
<div class="tx" style="left:-130.45px;width:400px;text-align:right;top:477.64px;font-size:9.4px;line-height:9.4px;color:#2f9a2f;font-weight:400;letter-spacing:0.55px;white-space:pre;">31,0</div>
<div style="left:10px;top:489.56000000000006px;width:263.5px;height:1px;background:#c4c4c4;"></div>
<div class="tx" style="left:15.4px;top:493.50px;font-size:9.4px;line-height:9.4px;color:#1a1a1a;font-weight:400;letter-spacing:0.52px;white-space:pre;">24/09/2014</div>
<div class="tx" style="left:-102.98px;width:400px;text-align:center;top:493.50px;font-size:9.4px;line-height:9.4px;color:#1a1a1a;font-weight:400;letter-spacing:0.45px;white-space:pre;">1</div>
<div class="tx" style="left:-54.58px;width:400px;text-align:center;top:493.50px;font-size:9.4px;line-height:9.4px;color:#1a1a1a;font-weight:400;letter-spacing:0.45px;white-space:pre;">0</div>
<div class="tx" style="left:-181.95px;width:400px;text-align:right;top:493.50px;font-size:9.4px;line-height:9.4px;color:#2f9a2f;font-weight:400;letter-spacing:0.55px;white-space:pre;">69,1</div>
<div class="tx" style="left:-130.45px;width:400px;text-align:right;top:493.50px;font-size:9.4px;line-height:9.4px;color:#2f9a2f;font-weight:400;letter-spacing:0.55px;white-space:pre;">345,5</div>
<div style="left:10px;top:505.42px;width:263.5px;height:1px;background:#c4c4c4;"></div>
<div class="tx" style="left:15.4px;top:509.36px;font-size:9.4px;line-height:9.4px;color:#1a1a1a;font-weight:400;letter-spacing:0.52px;white-space:pre;">29/09/2014</div>
<div class="tx" style="left:-102.98px;width:400px;text-align:center;top:509.36px;font-size:9.4px;line-height:9.4px;color:#1a1a1a;font-weight:400;letter-spacing:0.45px;white-space:pre;">0</div>
<div class="tx" style="left:-54.58px;width:400px;text-align:center;top:509.36px;font-size:9.4px;line-height:9.4px;color:#1a1a1a;font-weight:400;letter-spacing:0.45px;white-space:pre;">1</div>
<div class="tx" style="left:-181.95px;width:400px;text-align:right;top:509.36px;font-size:9.4px;line-height:9.4px;color:#f21c1c;font-weight:400;letter-spacing:0.55px;white-space:pre;">-26,4</div>
<div class="tx" style="left:-130.45px;width:400px;text-align:right;top:509.36px;font-size:9.4px;line-height:9.4px;color:#f21c1c;font-weight:400;letter-spacing:0.55px;white-space:pre;">-132,0</div>
<div style="left:10px;top:521.28px;width:263.5px;height:1px;background:#c4c4c4;"></div>
<div class="tx" style="left:15.4px;top:525.22px;font-size:9.4px;line-height:9.4px;color:#1a1a1a;font-weight:400;letter-spacing:0.52px;white-space:pre;">30/09/2014</div>
<div class="tx" style="left:-102.98px;width:400px;text-align:center;top:525.22px;font-size:9.4px;line-height:9.4px;color:#1a1a1a;font-weight:400;letter-spacing:0.45px;white-space:pre;">1</div>
<div class="tx" style="left:-54.58px;width:400px;text-align:center;top:525.22px;font-size:9.4px;line-height:9.4px;color:#1a1a1a;font-weight:400;letter-spacing:0.45px;white-space:pre;">0</div>
<div class="tx" style="left:-181.95px;width:400px;text-align:right;top:525.22px;font-size:9.4px;line-height:9.4px;color:#f21c1c;font-weight:400;letter-spacing:0.55px;white-space:pre;">-21,2</div>
<div class="tx" style="left:-130.45px;width:400px;text-align:right;top:525.22px;font-size:9.4px;line-height:9.4px;color:#f21c1c;font-weight:400;letter-spacing:0.55px;white-space:pre;">-106,0</div>
<div style="left:10px;top:537.14px;width:263.5px;height:1px;background:#c4c4c4;"></div>
<div class="tx" style="left:15.4px;top:541.08px;font-size:9.4px;line-height:9.4px;color:#1a1a1a;font-weight:400;letter-spacing:0.52px;white-space:pre;">01/10/2014</div>
<div class="tx" style="left:-102.98px;width:400px;text-align:center;top:541.08px;font-size:9.4px;line-height:9.4px;color:#1a1a1a;font-weight:400;letter-spacing:0.45px;white-space:pre;">1</div>
<div class="tx" style="left:-54.58px;width:400px;text-align:center;top:541.08px;font-size:9.4px;line-height:9.4px;color:#1a1a1a;font-weight:400;letter-spacing:0.45px;white-space:pre;">0</div>
<div class="tx" style="left:-181.95px;width:400px;text-align:right;top:541.08px;font-size:9.4px;line-height:9.4px;color:#f21c1c;font-weight:400;letter-spacing:0.55px;white-space:pre;">-108,0</div>
<div class="tx" style="left:-130.45px;width:400px;text-align:right;top:541.08px;font-size:9.4px;line-height:9.4px;color:#f21c1c;font-weight:400;letter-spacing:0.55px;white-space:pre;">-540,0</div>
<div style="left:10px;top:553.0px;width:263.5px;height:1px;background:#c4c4c4;"></div>
<div style="left:73.6px;top:315.5px;width:1px;height:240px;background:#c4c4c4;"></div>
<div style="left:121.5px;top:315.5px;width:1px;height:240px;background:#c4c4c4;"></div>
<div style="left:170.0px;top:315.5px;width:1px;height:240px;background:#c4c4c4;"></div>
<div style="left:220.75px;top:315.5px;width:1px;height:240px;background:#c4c4c4;"></div>
<div style="left:273.1px;top:315.5px;width:1px;height:240px;background:#c4c4c4;"></div>
<div style="left:274px;top:315.5px;width:19.5px;height:240px;background:#ffffff;"></div>
<div style="left:280.5px;top:315.5px;width:13px;height:240px;background:#f0f0f0;"></div>
<svg style="position:absolute;left:284px;top:321px" width="7" height="5" viewBox="0 0 7 5"><path d="M1 4 L3.5 1.5 L6 4 Z" fill="#333"/></svg>
<svg style="position:absolute;left:284px;top:547px" width="7" height="5" viewBox="0 0 7 5"><path d="M1 1 L3.5 3.5 L6 1 Z" fill="#333"/></svg>
<div style="left:281.5px;top:331px;width:11px;height:37.5px;border:1px solid #a8a8a8;border-radius:2px;box-sizing:border-box;background:linear-gradient(90deg,#f4f4f4,#dcdcdc)"></div>
<svg style="position:absolute;left:283px;top:344px" width="8" height="11" viewBox="0 0 8 11"><path d="M1.5 1.5 H6.5 M1.5 3.5 H6.5 M1.5 5.5 H6.5 M1.5 7.5 H6.5" stroke="#666" stroke-width="0.8"/></svg>
<div style="left:10px;top:555.8px;width:283.5px;height:16.2px;background:#c3c3c3;"></div>
<div class="tx" style="left:14px;top:560.24px;font-size:9.4px;line-height:9.4px;color:#222;font-weight:400;letter-spacing:0.45px;white-space:pre;">Trier par</div>
<svg style="position:absolute;left:63.2px;top:558.8px" width="11" height="11" viewBox="0 0 11 11"><defs><radialGradient id="rg68564" cx="0.4" cy="0.4" r="0.7"><stop offset="0" stop-color="#fff"/><stop offset="0.6" stop-color="#f4f4f4"/><stop offset="1" stop-color="#c8c8c8"/></radialGradient></defs><circle cx="5.5" cy="5.5" r="4.5" fill="url(#rg68564)" stroke="#8a8a8a" stroke-width="0.9"/><circle cx="5.5" cy="5.5" r="1.6" fill="#000"/></svg>
<svg style="position:absolute;left:110.0px;top:558.8px" width="11" height="11" viewBox="0 0 11 11"><defs><radialGradient id="rg115564" cx="0.4" cy="0.4" r="0.7"><stop offset="0" stop-color="#fff"/><stop offset="0.6" stop-color="#f4f4f4"/><stop offset="1" stop-color="#c8c8c8"/></radialGradient></defs><circle cx="5.5" cy="5.5" r="4.5" fill="url(#rg115564)" stroke="#8a8a8a" stroke-width="0.9"/></svg>
<svg style="position:absolute;left:159.5px;top:558.8px" width="11" height="11" viewBox="0 0 11 11"><defs><radialGradient id="rg165564" cx="0.4" cy="0.4" r="0.7"><stop offset="0" stop-color="#fff"/><stop offset="0.6" stop-color="#f4f4f4"/><stop offset="1" stop-color="#c8c8c8"/></radialGradient></defs><circle cx="5.5" cy="5.5" r="4.5" fill="url(#rg165564)" stroke="#8a8a8a" stroke-width="0.9"/></svg>
<div class="tx" style="left:77.5px;top:560.24px;font-size:9.4px;line-height:9.4px;color:#4e4e5a;font-weight:400;letter-spacing:0.45px;white-space:pre;">Date</div>
<div class="tx" style="left:124.2px;top:560.24px;font-size:9.4px;line-height:9.4px;color:#5a5a66;font-weight:400;letter-spacing:0.45px;white-space:pre;">Gains</div>
<div class="tx" style="left:174.2px;top:560.24px;font-size:9.4px;line-height:9.4px;color:#5a5a66;font-weight:400;letter-spacing:0.45px;white-space:pre;">Pertes</div>
<div style="left:293.5px;top:280.6px;width:2.5px;height:291.4px;background:#7a7a84;"></div>
<div style="left:296px;top:282.5px;width:494.3px;height:17px;background:#343a45;"></div>
<div style="left:343.39px;width:400px;text-align:center;top:286.84px;font-size:9.4px;line-height:9.4px;color:#e8e8ec;font-weight:400;letter-spacing:0.38px;white-space:pre;">Opérations du 17/09/2014</div>
<div style="left:296px;top:299.5px;width:494.3px;height:16px;background:#c8c8c8;"></div>
<div style="left:360.0px;top:299.5px;width:1px;height:16px;background:#b0b0b0;"></div>
<div style="left:415.75px;top:299.5px;width:1px;height:16px;background:#b0b0b0;"></div>
<div style="left:472.0px;top:299.5px;width:1px;height:16px;background:#b0b0b0;"></div>
<div style="left:513.0px;top:299.5px;width:1px;height:16px;background:#b0b0b0;"></div>
<div style="left:572.0px;top:299.5px;width:1px;height:16px;background:#b0b0b0;"></div>
<div style="left:630.75px;top:299.5px;width:1px;height:16px;background:#b0b0b0;"></div>
<div style="left:683.25px;top:299.5px;width:1px;height:16px;background:#b0b0b0;"></div>
<div style="left:734.1px;top:299.5px;width:1px;height:16px;background:#b0b0b0;"></div>
<div style="left:786.3px;top:299.5px;width:1px;height:16px;background:#b0b0b0;"></div>
<div class="tx" style="left:128.25px;width:400px;text-align:center;top:304.04px;font-size:9.4px;line-height:9.4px;color:#222;font-weight:400;letter-spacing:0.4px;white-space:pre;">Date</div>
<div class="tx" style="left:188.48px;width:400px;text-align:center;top:304.04px;font-size:9.4px;line-height:9.4px;color:#222;font-weight:400;letter-spacing:0.6px;white-space:pre;">Ouverture</div>
<div class="tx" style="left:244.40px;width:400px;text-align:center;top:304.04px;font-size:9.4px;line-height:9.4px;color:#222;font-weight:400;letter-spacing:0.44px;white-space:pre;">Fermeture</div>
<div class="tx" style="left:293.00px;width:400px;text-align:center;top:304.04px;font-size:9.4px;line-height:9.4px;color:#222;font-weight:400;letter-spacing:0.4px;white-space:pre;">Qte</div>
<div class="tx" style="left:168.69px;width:400px;text-align:right;top:304.04px;font-size:9.4px;line-height:9.4px;color:#222;font-weight:400;letter-spacing:0.49px;white-space:pre;">Prix Ouv.</div>
<div class="tx" style="left:227.32px;width:400px;text-align:right;top:304.04px;font-size:9.4px;line-height:9.4px;color:#222;font-weight:400;letter-spacing:0.37px;white-space:pre;">Prix Ferm.</div>
<div class="tx" style="left:279.72px;width:400px;text-align:right;top:304.04px;font-size:9.4px;line-height:9.4px;color:#222;font-weight:400;letter-spacing:0.27px;white-space:pre;">Gains Pts</div>
<div class="tx" style="left:330.54px;width:400px;text-align:right;top:304.04px;font-size:9.4px;line-height:9.4px;color:#222;font-weight:400;letter-spacing:0.24px;white-space:pre;">Cumul Pts</div>
<div class="tx" style="left:382.90px;width:400px;text-align:right;top:304.04px;font-size:9.4px;line-height:9.4px;color:#222;font-weight:400;letter-spacing:0.4px;white-space:pre;">Gains €</div>
<div style="left:296px;top:315.5px;width:494.3px;height:240.5px;background:#ffffff;"></div>
<div class="tx" style="left:128.00px;width:400px;text-align:center;top:319.04px;font-size:9.4px;line-height:9.4px;color:#1a1a1a;font-weight:400;letter-spacing:0.5px;white-space:pre;">17/09/2014</div>
<div class="tx" style="left:188.12px;width:400px;text-align:center;top:319.04px;font-size:9.4px;line-height:9.4px;color:#1a1a1a;font-weight:400;letter-spacing:0.5px;white-space:pre;">09:40</div>
<div class="tx" style="left:244.12px;width:400px;text-align:center;top:319.04px;font-size:9.4px;line-height:9.4px;color:#1a1a1a;font-weight:400;letter-spacing:0.5px;white-space:pre;">16:35</div>
<div class="tx" style="left:292.75px;width:400px;text-align:center;top:319.04px;font-size:9.4px;line-height:9.4px;color:#1a1a1a;font-weight:400;letter-spacing:0.5px;white-space:pre;">1</div>
<div class="tx" style="left:168.53px;width:400px;text-align:right;top:319.04px;font-size:9.4px;line-height:9.4px;color:#1a1a1a;font-weight:400;letter-spacing:0.53px;white-space:pre;">9 685,4</div>
<div class="tx" style="left:227.28px;width:400px;text-align:right;top:319.04px;font-size:9.4px;line-height:9.4px;color:#1a1a1a;font-weight:400;letter-spacing:0.53px;white-space:pre;">9 668,7</div>
<div class="tx" style="left:279.78px;width:400px;text-align:right;top:319.04px;font-size:9.4px;line-height:9.4px;color:#f21c1c;font-weight:400;letter-spacing:0.53px;white-space:pre;">-16,7</div>
<div class="tx" style="left:330.63px;width:400px;text-align:right;top:319.04px;font-size:9.4px;line-height:9.4px;color:#f21c1c;font-weight:400;letter-spacing:0.53px;white-space:pre;">-16,7</div>
<div class="tx" style="left:382.83px;width:400px;text-align:right;top:319.04px;font-size:9.4px;line-height:9.4px;color:#f21c1c;font-weight:400;letter-spacing:0.53px;white-space:pre;">-83,5</div>
<div style="left:296px;top:330.96000000000004px;width:494.3px;height:1px;background:#c4c4c4;"></div>
<div class="tx" style="left:128.00px;width:400px;text-align:center;top:334.90px;font-size:9.4px;line-height:9.4px;color:#1a1a1a;font-weight:400;letter-spacing:0.5px;white-space:pre;">17/09/2014</div>
<div class="tx" style="left:188.12px;width:400px;text-align:center;top:334.90px;font-size:9.4px;line-height:9.4px;color:#1a1a1a;font-weight:400;letter-spacing:0.5px;white-space:pre;">16:35</div>
<div class="tx" style="left:244.12px;width:400px;text-align:center;top:334.90px;font-size:9.4px;line-height:9.4px;color:#1a1a1a;font-weight:400;letter-spacing:0.5px;white-space:pre;">20:00</div>
<div class="tx" style="left:292.75px;width:400px;text-align:center;top:334.90px;font-size:9.4px;line-height:9.4px;color:#1a1a1a;font-weight:400;letter-spacing:0.5px;white-space:pre;">-1</div>
<div class="tx" style="left:168.53px;width:400px;text-align:right;top:334.90px;font-size:9.4px;line-height:9.4px;color:#1a1a1a;font-weight:400;letter-spacing:0.53px;white-space:pre;">9 668,7</div>
<div class="tx" style="left:227.28px;width:400px;text-align:right;top:334.90px;font-size:9.4px;line-height:9.4px;color:#1a1a1a;font-weight:400;letter-spacing:0.53px;white-space:pre;">9 692,9</div>
<div class="tx" style="left:279.78px;width:400px;text-align:right;top:334.90px;font-size:9.4px;line-height:9.4px;color:#f21c1c;font-weight:400;letter-spacing:0.53px;white-space:pre;">-24,2</div>
<div class="tx" style="left:330.63px;width:400px;text-align:right;top:334.90px;font-size:9.4px;line-height:9.4px;color:#f21c1c;font-weight:400;letter-spacing:0.53px;white-space:pre;">-40,9</div>
<div class="tx" style="left:382.83px;width:400px;text-align:right;top:334.90px;font-size:9.4px;line-height:9.4px;color:#f21c1c;font-weight:400;letter-spacing:0.53px;white-space:pre;">-121,0</div>
<div style="left:296px;top:346.82000000000005px;width:494.3px;height:1px;background:#c4c4c4;"></div>
<div class="tx" style="left:128.00px;width:400px;text-align:center;top:350.76px;font-size:9.4px;line-height:9.4px;color:#1a1a1a;font-weight:400;letter-spacing:0.5px;white-space:pre;">17/09/2014</div>
<div class="tx" style="left:188.12px;width:400px;text-align:center;top:350.76px;font-size:9.4px;line-height:9.4px;color:#1a1a1a;font-weight:400;letter-spacing:0.5px;white-space:pre;">20:00</div>
<div class="tx" style="left:244.12px;width:400px;text-align:center;top:350.76px;font-size:9.4px;line-height:9.4px;color:#1a1a1a;font-weight:400;letter-spacing:0.5px;white-space:pre;">22:05</div>
<div class="tx" style="left:292.75px;width:400px;text-align:center;top:350.76px;font-size:9.4px;line-height:9.4px;color:#1a1a1a;font-weight:400;letter-spacing:0.5px;white-space:pre;">1</div>
<div class="tx" style="left:168.53px;width:400px;text-align:right;top:350.76px;font-size:9.4px;line-height:9.4px;color:#1a1a1a;font-weight:400;letter-spacing:0.53px;white-space:pre;">9 692,9</div>
<div class="tx" style="left:227.28px;width:400px;text-align:right;top:350.76px;font-size:9.4px;line-height:9.4px;color:#1a1a1a;font-weight:400;letter-spacing:0.53px;white-space:pre;">9 684,0</div>
<div class="tx" style="left:279.78px;width:400px;text-align:right;top:350.76px;font-size:9.4px;line-height:9.4px;color:#f21c1c;font-weight:400;letter-spacing:0.53px;white-space:pre;">-8,9</div>
<div class="tx" style="left:330.63px;width:400px;text-align:right;top:350.76px;font-size:9.4px;line-height:9.4px;color:#f21c1c;font-weight:400;letter-spacing:0.53px;white-space:pre;">-49,8</div>
<div class="tx" style="left:382.83px;width:400px;text-align:right;top:350.76px;font-size:9.4px;line-height:9.4px;color:#f21c1c;font-weight:400;letter-spacing:0.53px;white-space:pre;">-44,5</div>
<div style="left:296px;top:362.68000000000006px;width:494.3px;height:1px;background:#c4c4c4;"></div>
<div style="left:360.0px;top:315.5px;width:1px;height:47.58px;background:#c4c4c4;"></div>
<div style="left:415.75px;top:315.5px;width:1px;height:47.58px;background:#c4c4c4;"></div>
<div style="left:472.0px;top:315.5px;width:1px;height:47.58px;background:#c4c4c4;"></div>
<div style="left:513.0px;top:315.5px;width:1px;height:47.58px;background:#c4c4c4;"></div>
<div style="left:572.0px;top:315.5px;width:1px;height:47.58px;background:#c4c4c4;"></div>
<div style="left:630.75px;top:315.5px;width:1px;height:47.58px;background:#c4c4c4;"></div>
<div style="left:683.25px;top:315.5px;width:1px;height:47.58px;background:#c4c4c4;"></div>
<div style="left:734.1px;top:315.5px;width:1px;height:47.58px;background:#c4c4c4;"></div>
<div style="left:786.3px;top:315.5px;width:1px;height:47.58px;background:#c4c4c4;"></div>
<div style="left:296px;top:556.2px;width:494.3px;height:15.8px;background:#c3c3c3;"></div>
<div class="tx" style="left:299.8px;top:559.98px;font-size:9px;line-height:9px;color:#4a4a5a;font-weight:400;letter-spacing:0.55px;white-space:pre;">Nb d&#39;opérations : 3</div>
<div style="left:789.5px;top:97px;width:2.5px;height:478px;background:#f4f4f4;"></div>
<div style="left:792px;top:97px;width:2px;height:478px;background:#a0a0a0;"></div>
<div style="left:794px;top:62px;width:1.5px;height:530px;background:#7a7a7a;"></div>
<div style="left:795.5px;top:62px;width:0.5px;height:530px;background:#a8b4c0;"></div>
<div style="left:6px;top:572px;width:788px;height:2px;background:#f4f4f4;"></div>
<div style="left:6px;top:573.9px;width:788.5px;height:1.7px;background:#8c8c8c;"></div>
<div style="left:6px;top:575.8px;width:788.5px;height:14px;background:#efefef;"></div>
<div style="left:6px;top:575.8px;width:788.5px;height:0.8px;background:#fafafa;"></div>
<div style="left:6px;top:589.8px;width:789px;height:1.8px;background:#3a3a3a;"></div>
<svg style="position:absolute;left:783px;top:580px" width="11" height="11" viewBox="0 0 11 11"><path d="M9.5 1.5 L1.5 9.5 M9.5 4.5 L4.5 9.5 M9.5 7.5 L7.5 9.5" stroke="#8a8a8a" stroke-width="1"/></svg>
</body></html>
